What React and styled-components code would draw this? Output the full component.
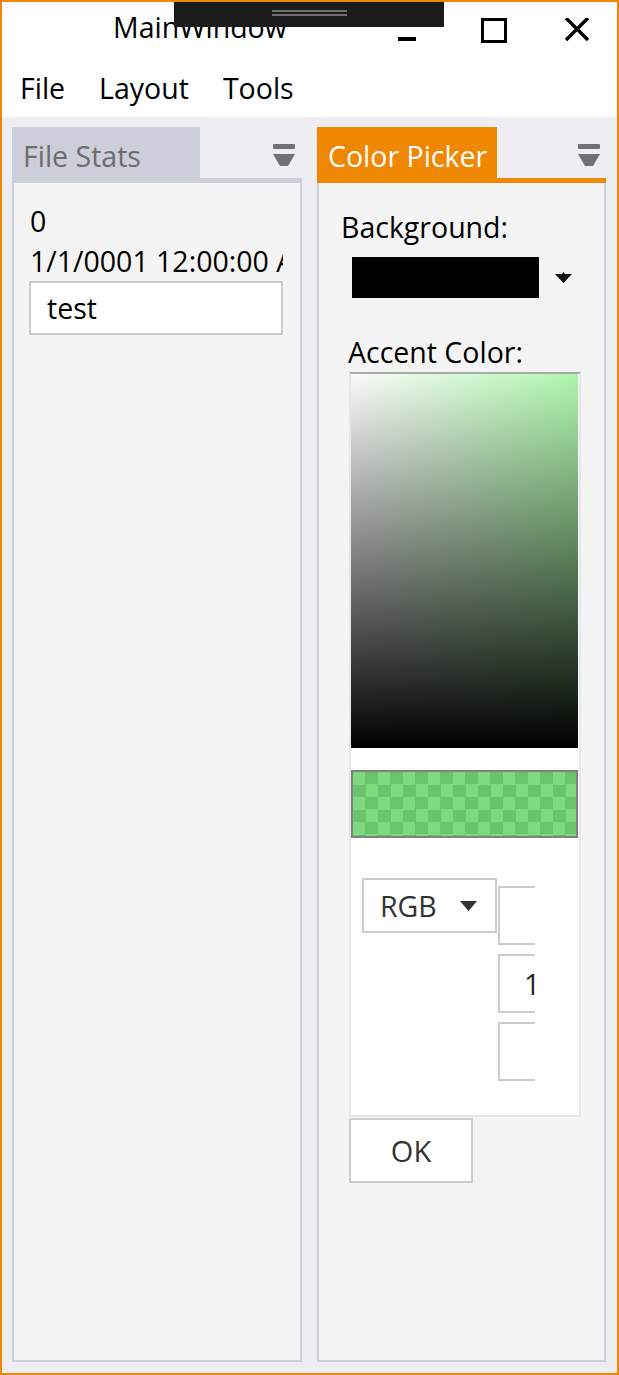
import React from "react";
import styled, { createGlobalStyle } from "styled-components";

const ORANGE = "#f08700";
const DOCK = "#cccedb";

const GlobalStyle = createGlobalStyle`
  html, body {
    margin: 0;
    padding: 0;
    background: #ffffff;
  }
  body {
    font-family: "Open Sans", "Noto Sans", sans-serif;
  }
  * {
    box-sizing: border-box;
  }
`;

const Window = styled.div`
  position: relative;
  width: 619px;
  height: 1375px;
  border: 2px solid ${ORANGE};
  background: #eeeef2;
  display: flex;
  flex-direction: column;
  overflow: hidden;
`;

const DragHandle = styled.div`
  position: absolute;
  top: -2px;
  left: 172px;
  width: 270px;
  height: 27px;
  background: #1b1b1b;
  display: flex;
  flex-direction: column;
  align-items: center;
  justify-content: center;
  gap: 2px;
  padding-bottom: 1px;

  span {
    display: block;
    width: 75px;
    height: 2px;
    background: #707070;
  }
`;

const TitleBar = styled.div`
  height: 60px;
  background: #ffffff;
  display: flex;
`;

const Title = styled.div`
  flex: 1;
  padding-left: 111px;
  font-size: 28.5px;
  line-height: 51px;
  color: #000;
`;

const Controls = styled.div`
  display: flex;
  padding-right: 2px;
`;

const ControlCell = styled.div`
  width: ${(p) => p.$w}px;
  display: flex;
  justify-content: center;
  padding-top: 16px;
`;

const MenuBar = styled.div`
  height: 55px;
  background: #ffffff;
  display: flex;
  padding-left: 1px;
`;

const MenuItem = styled.div`
  padding: 0 17px 0 17px;
  font-size: 28.5px;
  line-height: 53px;
  color: #000;
`;

const DockArea = styled.div`
  flex: 1;
  display: flex;
  gap: 15px;
  padding: 10px 11px 11px 10px;
  min-height: 0;
`;

const Pane = styled.div`
  width: ${(p) => p.$width}px;
  display: flex;
  flex-direction: column;
`;

const TabRow = styled.div`
  height: 51px;
  display: flex;
  align-items: stretch;
  justify-content: space-between;
`;

const Tab = styled.div`
  min-width: ${(p) => (p.$wide ? 188 : 0)}px;
  padding: 7px 10px 0 11px;
  display: flex;
  align-items: center;
  background: ${(p) => (p.$active ? ORANGE : DOCK)};
  color: ${(p) => (p.$active ? "#ffffff" : "#6d6d6d")};
  font-size: 28.5px;
  white-space: nowrap;
`;

const PinButton = styled.div`
  align-self: center;
  margin: 4px ${(p) => p.$right}px 0 0;
  width: 22px;
  height: 22px;
  display: flex;
`;

const Strip = styled.div`
  height: 5px;
  background: ${(p) => (p.$active ? ORANGE : DOCK)};
`;

const PaneBody = styled.div`
  flex: 1;
  background: #f4f4f4;
  border: 2px solid ${DOCK};
  border-top: none;
  display: flex;
  flex-direction: column;
  padding: ${(p) => p.$pad};
  overflow: hidden;
`;

const Stack = styled.div`
  display: flex;
  flex-direction: column;
  overflow: hidden;
`;

const Line = styled.div`
  font-size: 28.5px;
  line-height: 40px;
  color: #000;
  white-space: nowrap;
  padding-left: 1px;
`;

const TextBox = styled.div`
  height: 54px;
  background: #ffffff;
  border: 2px solid #cccccc;
  display: flex;
  align-items: center;
  padding-left: 16px;
  font-size: 28.5px;
  color: #000;
`;

const Label = styled.div`
  margin: ${(p) => p.$top || 0}px 0 0 ${(p) => p.$indent || 0}px;
  font-size: 28.5px;
  line-height: 40px;
  color: #000;
  white-space: nowrap;
`;

const ColorCombo = styled.div`
  display: flex;
  align-items: center;
  margin: 10px 0 0 11px;
`;

const Swatch = styled.div`
  width: 187px;
  height: 41px;
  background: ${(p) => p.$color};
`;

const ComboArrow = styled.svg`
  margin-left: 16px;
  width: 17px;
  height: 11px;
`;

const PickerBox = styled.div`
  width: 232px;
  height: 745px;
  margin-left: 8px;
  background: #ffffff;
  border: 2px solid #e3e6ee;
  border-top-color: #a9a9a9;
  display: flex;
  flex-direction: column;
`;

const Spectrum = styled.div`
  height: 374px;
  margin-right: 1px;
  background: linear-gradient(to bottom, rgba(0, 0, 0, 0), #000000),
    linear-gradient(to right, #fbfbfb, #aef7ac);
`;

const AlphaBar = styled.div`
  margin: 22px 1px 0 0;
  height: 68px;
  border: 2px solid #808080;
  background: repeating-conic-gradient(#6ac46c 0% 25%, #7dda7f 0% 50%) 0 0 /
    25px 25px;
`;

const ModeRow = styled.div`
  display: flex;
  align-items: flex-start;
  margin-top: 40px;
  padding-left: 11px;
`;

const ModeCombo = styled.div`
  width: 135px;
  height: 55px;
  background: #ffffff;
  border: 2px solid #cccccc;
  display: flex;
  align-items: center;
  justify-content: space-between;
  padding: 0 18px 0 16px;
  font-size: 28.5px;
  color: #333333;
`;

const FieldColumn = styled.div`
  width: 37px;
  margin-left: 1px;
  padding-top: 8px;
  display: flex;
  flex-direction: column;
  gap: 9px;
  overflow: hidden;
`;

const FieldBox = styled.div`
  flex: none;
  width: 120px;
  height: ${(p) => p.$h}px;
  background: #ffffff;
  border: 2px solid #cccccc;
  display: flex;
  align-items: center;
  padding-left: 24px;
  font-size: 28.5px;
  color: #222222;
`;

const OkButton = styled.div`
  width: 124px;
  height: 65px;
  margin: 1px 0 0 8px;
  background: #ffffff;
  border: 2px solid #cccccc;
  display: flex;
  align-items: center;
  justify-content: center;
  font-size: 29px;
  color: #333333;
`;

const PinIcon = () => (
  <svg width="22" height="22" viewBox="0 0 22 22">
    <rect x="0" y="0" width="22" height="5" rx="1" fill="#717171" />
    <path d="M0 10 H22 L15 22 H7 Z" fill="#717171" />
  </svg>
);

const PaneHeader = ({ title, active, wide, pinRight }) => (
  <>
    <TabRow>
      <Tab $active={active} $wide={wide}>
        {title}
      </Tab>
      <PinButton $right={pinRight}>
        <PinIcon />
      </PinButton>
    </TabRow>
    <Strip $active={active} />
  </>
);

export default function App() {
  return (
    <>
      <GlobalStyle />
      <Window>
        <TitleBar>
          <Title>MainWindow</Title>
          <Controls>
            <ControlCell $w={86}>
              <svg width="26" height="26" viewBox="0 0 26 26">
                <rect x="4" y="19" width="18" height="4" fill="#000" />
              </svg>
            </ControlCell>
            <ControlCell $w={88}>
              <svg width="26" height="26" viewBox="0 0 26 26">
                <rect
                  x="1.5"
                  y="1.5"
                  width="23"
                  height="22"
                  fill="none"
                  stroke="#000"
                  strokeWidth="3"
                />
              </svg>
            </ControlCell>
            <ControlCell $w={77}>
              <svg width="26" height="26" viewBox="0 1 26 26">
                <path
                  d="M2 1 L24 23 M24 1 L2 23"
                  stroke="#000"
                  strokeWidth="3.4"
                  fill="none"
                />
              </svg>
            </ControlCell>
          </Controls>
        </TitleBar>
        <DragHandle>
          <span />
          <span />
        </DragHandle>
        <MenuBar>
          <MenuItem>File</MenuItem>
          <MenuItem>Layout</MenuItem>
          <MenuItem>Tools</MenuItem>
        </MenuBar>
        <DockArea>
          <Pane $width={290}>
            <PaneHeader title="File Stats" wide pinRight={7} />
            <PaneBody $pad="18px 17px 0 15px">
              <Stack>
                <Line>0</Line>
                <Line>1/1/0001 12:00:00 AM</Line>
                <TextBox>test</TextBox>
              </Stack>
            </PaneBody>
          </Pane>
          <Pane $width={289}>
            <PaneHeader title="Color Picker" active pinRight={6} />
            <PaneBody $pad="24px 0 0 22px">
              <Label>Background:</Label>
              <ColorCombo>
                <Swatch $color="#000000" />
                <ComboArrow viewBox="0 0 17 11">
                  <path d="M0 2 H7 L8.5 0 L10 2 H17 L8.5 11 Z" fill="#111" />
                </ComboArrow>
              </ColorCombo>
              <Label $top={34} $indent={7}>
                Accent Color:
              </Label>
              <PickerBox>
                <Spectrum />
                <AlphaBar />
                <ModeRow>
                  <ModeCombo>
                    RGB
                    <svg width="17" height="10" viewBox="0 0 17 10">
                      <path d="M0 0 H17 L8.5 10 Z" fill="#333" />
                    </svg>
                  </ModeCombo>
                  <FieldColumn>
                    <FieldBox $h={59} />
                    <FieldBox $h={59}>174</FieldBox>
                    <FieldBox $h={59} />
                  </FieldColumn>
                </ModeRow>
              </PickerBox>
              <OkButton>OK</OkButton>
            </PaneBody>
          </Pane>
        </DockArea>
      </Window>
    </>
  );
}
